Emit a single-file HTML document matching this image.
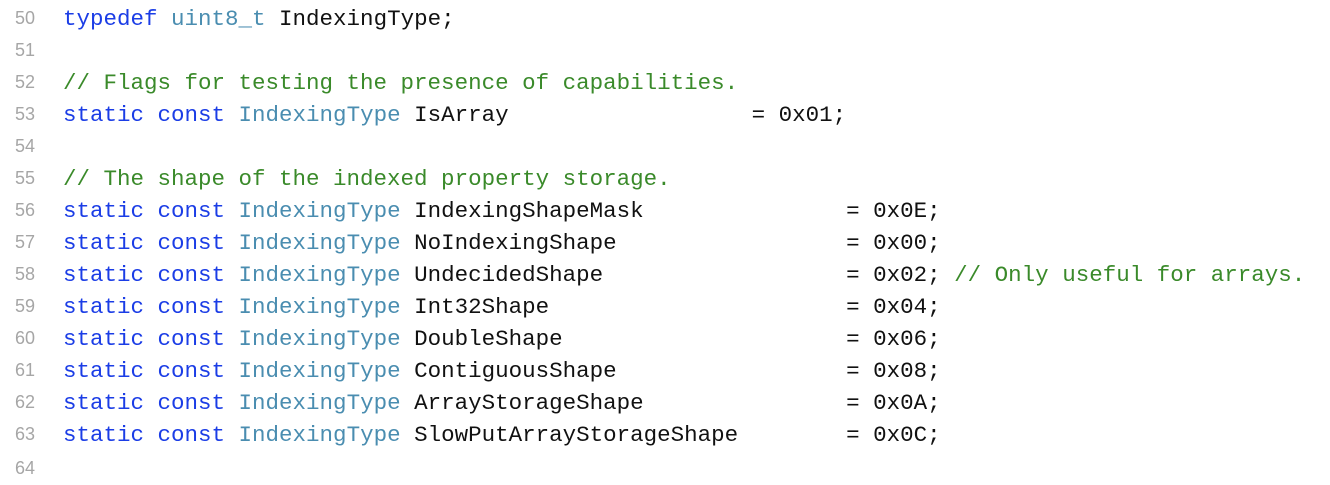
<!DOCTYPE html>
<html><head><style>
html,body{margin:0;padding:0;background:#fff;width:1330px;height:466px;overflow:hidden}
.l{position:absolute;left:0;height:32px;width:1330px}
.n{position:absolute;left:0;width:35px;text-align:right;font-family:"Liberation Sans",sans-serif;font-size:18px;color:#a6a6a6;top:5px}
.c{position:absolute;left:63px;top:3px;font-family:"Liberation Mono",monospace;font-size:22.5px;white-space:pre;color:#111;line-height:26px}
.k{color:#1b3de6}.t{color:#4a8db0}.g{color:#3a8a2a}
</style></head><body>
<div class="l" style="top:3px"><span class="n">50</span><span class="c"><span class="k">typedef</span> <span class="t">uint8_t</span> IndexingType;</span></div>
<div class="l" style="top:35px"><span class="n">51</span></div>
<div class="l" style="top:67px"><span class="n">52</span><span class="c g">// Flags for testing the presence of capabilities.</span></div>
<div class="l" style="top:99px"><span class="n">53</span><span class="c"><span class="k">static const</span> <span class="t">IndexingType</span> IsArray                  = 0x01;</span></div>
<div class="l" style="top:131px"><span class="n">54</span></div>
<div class="l" style="top:163px"><span class="n">55</span><span class="c g">// The shape of the indexed property storage.</span></div>
<div class="l" style="top:195px"><span class="n">56</span><span class="c"><span class="k">static const</span> <span class="t">IndexingType</span> IndexingShapeMask               = 0x0E;</span></div>
<div class="l" style="top:227px"><span class="n">57</span><span class="c"><span class="k">static const</span> <span class="t">IndexingType</span> NoIndexingShape                 = 0x00;</span></div>
<div class="l" style="top:259px"><span class="n">58</span><span class="c"><span class="k">static const</span> <span class="t">IndexingType</span> UndecidedShape                  = 0x02; <span class="g">// Only useful for arrays.</span></span></div>
<div class="l" style="top:291px"><span class="n">59</span><span class="c"><span class="k">static const</span> <span class="t">IndexingType</span> Int32Shape                      = 0x04;</span></div>
<div class="l" style="top:323px"><span class="n">60</span><span class="c"><span class="k">static const</span> <span class="t">IndexingType</span> DoubleShape                     = 0x06;</span></div>
<div class="l" style="top:355px"><span class="n">61</span><span class="c"><span class="k">static const</span> <span class="t">IndexingType</span> ContiguousShape                 = 0x08;</span></div>
<div class="l" style="top:387px"><span class="n">62</span><span class="c"><span class="k">static const</span> <span class="t">IndexingType</span> ArrayStorageShape               = 0x0A;</span></div>
<div class="l" style="top:419px"><span class="n">63</span><span class="c"><span class="k">static const</span> <span class="t">IndexingType</span> SlowPutArrayStorageShape        = 0x0C;</span></div>
<div class="l" style="top:453px"><span class="n">64</span></div>
</body></html>
